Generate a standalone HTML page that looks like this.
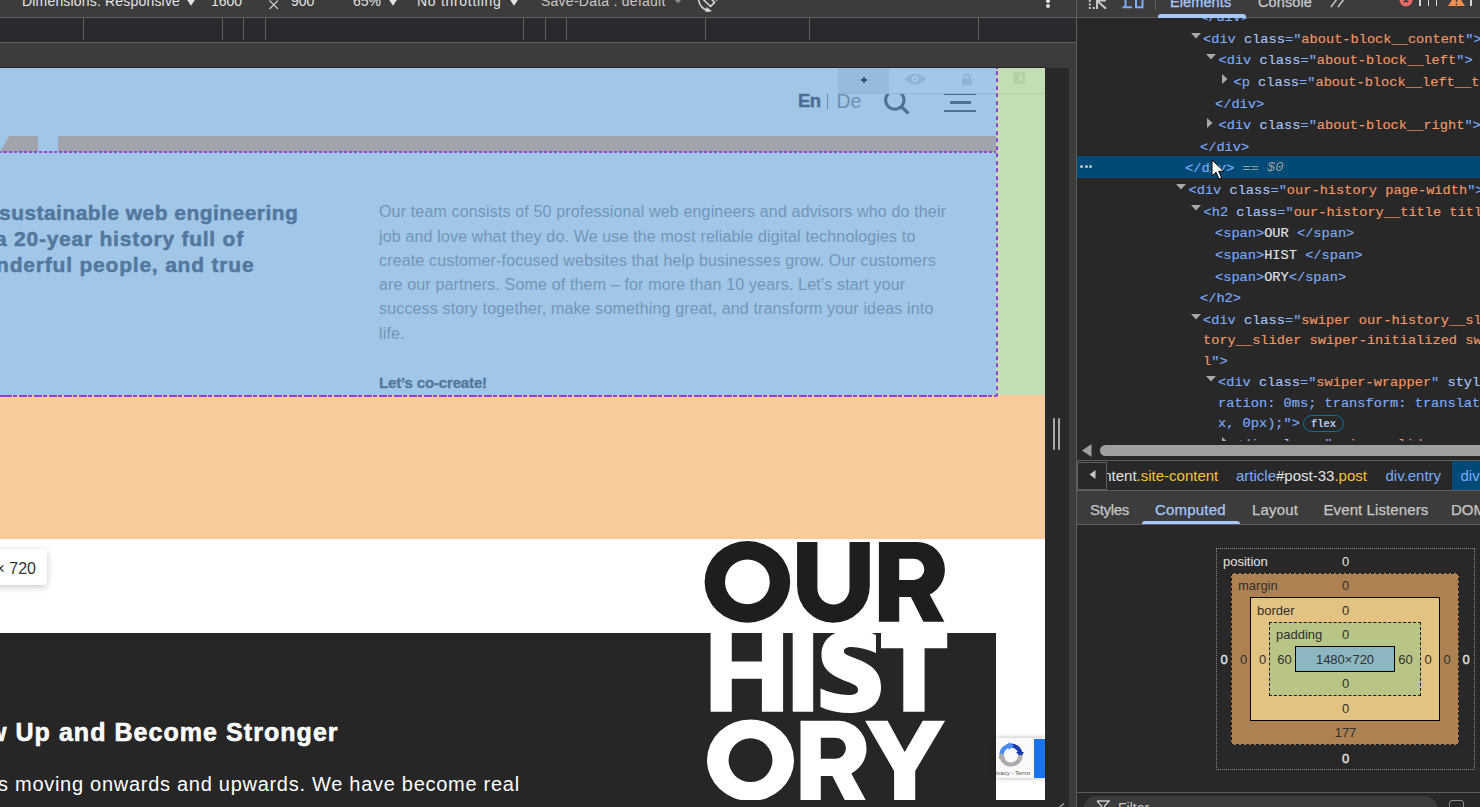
<!DOCTYPE html><html><head><meta charset="utf-8"><style>
html,body{margin:0;padding:0;width:1480px;height:807px;overflow:hidden;background:#282828;}
.t{position:absolute;white-space:pre;}
.r{position:absolute;}
svg{position:absolute;}
</style></head><body>
<div class="r" style="left:0px;top:0px;width:1076px;height:17px;background:#3c3c3c;"></div>
<div class="r" style="left:0px;top:17px;width:1076px;height:1px;background:#5e5e5e;"></div>
<div class="r" style="left:0px;top:18px;width:1076px;height:24px;background:#292a2d;"></div>
<div class="r" style="left:83px;top:18px;width:1px;height:22px;background:#5e5e5e;"></div>
<div class="r" style="left:222px;top:18px;width:1px;height:22px;background:#5e5e5e;"></div>
<div class="r" style="left:243px;top:18px;width:1px;height:22px;background:#5e5e5e;"></div>
<div class="r" style="left:265px;top:18px;width:1px;height:22px;background:#5e5e5e;"></div>
<div class="r" style="left:523px;top:18px;width:1px;height:22px;background:#5e5e5e;"></div>
<div class="r" style="left:545px;top:18px;width:1px;height:22px;background:#5e5e5e;"></div>
<div class="r" style="left:566px;top:18px;width:1px;height:22px;background:#5e5e5e;"></div>
<div class="r" style="left:705px;top:18px;width:1px;height:22px;background:#5e5e5e;"></div>
<div class="r" style="left:809px;top:18px;width:1px;height:22px;background:#5e5e5e;"></div>
<div class="r" style="left:978px;top:18px;width:1px;height:22px;background:#5e5e5e;"></div>
<div class="r" style="left:0px;top:42px;width:1076px;height:1px;background:#5e5e5e;"></div>
<div class="r" style="left:0px;top:43px;width:1076px;height:764px;background:#3c3c3c;"></div>
<div class="r" style="left:0px;top:68px;width:1069px;height:739px;background:#28292b;"></div>
<div class="r" style="left:0px;top:67px;width:1045px;height:1px;background:#252525;"></div>
<div class="t" style="left:22px;top:-5.85px;font-size:14px;line-height:14px;color:#e3e3e3;font-weight:400;font-family:'Liberation Sans', sans-serif;letter-spacing:0.18px;">Dimensions: Responsive</div>
<div class="t" style="left:211px;top:-5.85px;font-size:14px;line-height:14px;color:#e3e3e3;font-weight:400;font-family:'Liberation Sans', sans-serif;letter-spacing:0px;">1600</div>
<div class="t" style="left:291px;top:-5.85px;font-size:14px;line-height:14px;color:#e3e3e3;font-weight:400;font-family:'Liberation Sans', sans-serif;letter-spacing:0px;">900</div>
<div class="t" style="left:353px;top:-5.85px;font-size:14px;line-height:14px;color:#e3e3e3;font-weight:400;font-family:'Liberation Sans', sans-serif;letter-spacing:0px;">65%</div>
<div class="t" style="left:417px;top:-5.85px;font-size:14px;line-height:14px;color:#e3e3e3;font-weight:400;font-family:'Liberation Sans', sans-serif;letter-spacing:0.7px;">No throttling</div>
<div class="t" style="left:541px;top:-5.85px;font-size:14px;line-height:14px;color:#c7c7c7;font-weight:400;font-family:'Liberation Sans', sans-serif;letter-spacing:0.25px;">Save-Data : default</div>
<svg style="left:185px;top:-4px" width="12" height="12" viewBox="0 0 12 12"><path d="M0.8 2 L11.2 2 L6 9.7 Z" fill="#e3e3e3"/></svg>
<svg style="left:387px;top:-4px" width="12" height="12" viewBox="0 0 12 12"><path d="M0.8 2 L11.2 2 L6 9.7 Z" fill="#e3e3e3"/></svg>
<svg style="left:508.29999999999995px;top:-4px" width="12" height="12" viewBox="0 0 12 12"><path d="M0.8 2 L11.2 2 L6 9.7 Z" fill="#e3e3e3"/></svg>
<svg style="left:672.4px;top:-4px" width="12" height="12" viewBox="0 0 12 12"><path d="M0.8 2 L11.2 2 L6 7.2 Z" fill="#8e8e8e"/></svg>
<svg style="left:268px;top:-1px" width="12" height="11" viewBox="0 0 12 11"><path d="M1.5 1.5 L10 10 M10 1.5 L1.5 10" stroke="#c7c7c7" stroke-width="1.3"/></svg>
<svg style="left:690px;top:0px" width="30" height="16" viewBox="0 0 30 16"><path d="M8.6 0 A12.5 12.5 0 0 0 19.5 10.9" fill="none" stroke="#d6d6d6" stroke-width="1.6"/><path d="M16.4 6.9 L22.2 11.2 L15.6 12 Z" fill="#d6d6d6"/><path d="M13.5 -0.3 L20.5 6.5 L24.6 2.4 L17.7 -4.5" fill="none" stroke="#d6d6d6" stroke-width="1.6" stroke-linejoin="round"/><rect x="25.5" y="-1" width="2" height="2" fill="#9e9e9e"/></svg>
<div class="r" style="left:1046px;top:-1.5px;width:4px;height:4px;background:#e3e3e3;border-radius:50%"></div>
<div class="r" style="left:1046px;top:4.2px;width:4px;height:4px;background:#e3e3e3;border-radius:50%"></div>
<div class="r" style="left:1053px;top:417.5px;width:2.2px;height:32.5px;background:#a8a8a8;border-radius:1px"></div>
<div class="r" style="left:1057.5px;top:417.5px;width:2.2px;height:32.5px;background:#a8a8a8;border-radius:1px"></div>
<svg style="left:1055px;top:800px" width="12" height="8" viewBox="0 0 12 8"><path d="M3.5 8 L9 3.5" stroke="#9e9e9e" stroke-width="1.6"/></svg>
<div class="r" style="left:1076px;top:0px;width:1px;height:807px;background:#5e5e5e;"></div>
<div class="r" style="left:0px;top:68px;width:996px;height:327px;background:#a0c6e8;"></div>
<div class="r" style="left:996px;top:68px;width:49px;height:327px;background:#c3ddb5;"></div>
<div class="r" style="left:0px;top:136px;width:38px;height:16px;background:#a0a4ad;clip-path:polygon(0 100%,9px 0,100% 0,100% 100%)"></div>
<div class="r" style="left:58px;top:136px;width:938px;height:16px;background:#a0a4ad;"></div>
<div class="r" style="left:0px;top:395px;width:1045px;height:144px;background:#f7cb9c;"></div>
<div class="r" style="left:0px;top:539px;width:1045px;height:94px;background:#ffffff;"></div>
<div class="r" style="left:0px;top:633px;width:996px;height:167px;background:#262626;"></div>
<div class="r" style="left:996px;top:633px;width:49px;height:167px;background:#ffffff;"></div>
<div class="t" style="left:798px;top:92.34px;font-size:18.5px;line-height:18.5px;color:#4a6e93;font-weight:700;font-family:'Liberation Sans', sans-serif;letter-spacing:-0.5px;-webkit-text-stroke:0.4px #4a6e93">En</div>
<div class="r" style="left:827px;top:94px;width:1px;height:15px;background:#6a8db0;"></div>
<div class="t" style="left:836.5px;top:91.59px;font-size:19.5px;line-height:19.5px;color:#6e91b3;font-weight:400;font-family:'Liberation Sans', sans-serif;letter-spacing:0px;">De</div>
<svg style="left:880px;top:86px" width="32" height="30" viewBox="0 0 32 30"><circle cx="14.8" cy="14" r="9.2" fill="none" stroke="#4d7197" stroke-width="3.1"/><path d="M21 20.5 L28.5 27.5" stroke="#4d7197" stroke-width="3.2"/></svg>
<div class="r" style="left:944px;top:93px;width:32px;height:2px;background:#4d7197;"></div>
<div class="r" style="left:949.5px;top:101px;width:21px;height:2.5px;background:#4d7197;"></div>
<div class="r" style="left:944px;top:109.5px;width:32px;height:2.5px;background:#4d7197;"></div>
<div class="r" style="left:838px;top:68px;width:158px;height:25px;background:#a2c7e9;"></div>
<div class="r" style="left:838px;top:68px;width:51px;height:25px;background:#97badf;"></div>
<div class="r" style="left:838px;top:93px;width:158px;height:1px;background:#94b6d6;"></div>
<div class="r" style="left:996px;top:93px;width:49px;height:1px;background:#b5cfa8;"></div>
<div class="r" style="left:861px;top:79px;width:6px;height:2.2px;background:#2f4f7a;"></div>
<div class="r" style="left:862.9px;top:77px;width:2.2px;height:6px;background:#2f4f7a;"></div>
<svg style="left:903px;top:71px" width="24" height="16" viewBox="0 0 24 16"><path d="M1 8 Q12 -3 23 8 Q12 19 1 8 Z" fill="#8fb4d8"/><circle cx="12" cy="8" r="3.2" fill="#a6c9ea"/><circle cx="12" cy="8" r="1.6" fill="#8fb4d8"/></svg>
<svg style="left:961px;top:72px" width="12" height="14" viewBox="0 0 12 14"><path d="M3.2 7 V5 A2.8 2.8 0 0 1 8.8 5 V7" fill="none" stroke="#8fb4d8" stroke-width="1.7"/><rect x="1" y="6.2" width="10" height="7" rx="0.8" fill="#8fb4d8"/></svg>
<svg style="left:1013px;top:72px" width="12" height="12" viewBox="0 0 12 12"><rect x="0" y="0" width="12" height="12" rx="2" fill="#b3cfa5"/><circle cx="6" cy="6" r="3.5" fill="#c3ddb5"/><path d="M6 2.5 A3.5 3.5 0 0 0 6 9.5 Z" fill="#b3cfa5"/></svg>
<div class="t" style="left:-1px;top:201.92px;font-size:21px;line-height:21px;color:#52789e;font-weight:700;font-family:'Liberation Sans', sans-serif;letter-spacing:0.45px;-webkit-text-stroke:0.5px #52789e">sustainable web engineering</div>
<div class="t" style="left:-5px;top:228.12px;font-size:21px;line-height:21px;color:#52789e;font-weight:700;font-family:'Liberation Sans', sans-serif;letter-spacing:0.76px;-webkit-text-stroke:0.5px #52789e">a 20-year history full of</div>
<div class="t" style="left:-4px;top:254.22px;font-size:21px;line-height:21px;color:#52789e;font-weight:700;font-family:'Liberation Sans', sans-serif;letter-spacing:0.8px;-webkit-text-stroke:0.5px #52789e">nderful people, and true</div>
<div class="t" style="left:379px;top:204.26px;font-size:16px;line-height:16px;color:#7296b9;font-weight:400;font-family:'Liberation Sans', sans-serif;letter-spacing:0.16px;">Our team consists of 50 professional web engineers and advisors who do their</div>
<div class="t" style="left:379px;top:228.56px;font-size:16px;line-height:16px;color:#7296b9;font-weight:400;font-family:'Liberation Sans', sans-serif;letter-spacing:0.16px;">job and love what they do. We use the most reliable digital technologies to</div>
<div class="t" style="left:379px;top:252.86px;font-size:16px;line-height:16px;color:#7296b9;font-weight:400;font-family:'Liberation Sans', sans-serif;letter-spacing:0.16px;">create customer-focused websites that help businesses grow. Our customers</div>
<div class="t" style="left:379px;top:277.06px;font-size:16px;line-height:16px;color:#7296b9;font-weight:400;font-family:'Liberation Sans', sans-serif;letter-spacing:0.16px;">are our partners. Some of them – for more than 10 years. Let’s start your</div>
<div class="t" style="left:379px;top:301.46px;font-size:16px;line-height:16px;color:#7296b9;font-weight:400;font-family:'Liberation Sans', sans-serif;letter-spacing:0.16px;">success story together, make something great, and transform your ideas into</div>
<div class="t" style="left:379px;top:325.86px;font-size:16px;line-height:16px;color:#7296b9;font-weight:400;font-family:'Liberation Sans', sans-serif;letter-spacing:0.16px;">life.</div>
<div class="t" style="left:379px;top:375.20px;font-size:15px;line-height:15px;color:#52789e;font-weight:700;font-family:'Liberation Sans', sans-serif;letter-spacing:-0.15px;-webkit-text-stroke:0.3px #52789e">Let’s co-create!</div>
<div class="r" style="left:0px;top:151.4px;width:996px;height:1.7px;background:repeating-linear-gradient(90deg,#9241d2 0 2.8px,transparent 2.8px 5px);background-position-x:4.05px"></div>
<div class="r" style="left:0px;top:395px;width:997px;height:2px;background:repeating-linear-gradient(90deg,#9241d2 0 7.8px,transparent 7.8px 9.1px,#9241d2 9.1px 12.8px,transparent 12.8px 15px);background-position-x:4.05px"></div>
<div class="r" style="left:996.2px;top:68px;width:1.7px;height:328px;background:repeating-linear-gradient(180deg,#9241d2 0 3.7px,transparent 3.7px 7.5px);background-position-y:3.2px"></div>
<svg style="left:690px;top:530px" width="270" height="270" viewBox="0 0 270 270"><path fill="#1e1e1e" fill-rule="evenodd" d="M14.60,51.90 A42.8,40.8 0 1 0 100.20,51.90 A42.8,40.8 0 1 0 14.60,51.90 Z M35.00,51.90 A22.4,22.4 0 1 1 79.80,51.90 A22.4,22.4 0 1 1 35.00,51.90 Z"/><path transform="translate(107.10,11.90)" d="M0,0 H20.3 V46.45 A16.05,16.05 0 0 0 52.4,46.45 V0 H72.7 V44.45 A36.35,36.35 0 0 1 0,44.45 Z" fill="#1e1e1e"/><path transform="translate(188.90,11.90)" d="M0,0 H38 A28,27.6 0 0 1 66,27.6 A27.5,27.5 0 0 1 50.8,52.6 L65.5,79.8 H44.5 L32,55.1 H20.3 V79.8 H0 Z M20.3,16.9 H34.9 A10.55,10.55 0 0 1 34.9,38 H20.3 Z" fill="#1e1e1e" fill-rule="evenodd"/><path transform="translate(20.60,102.70)" d="M0,0 H21.2 V28.7 H51.3 V0 H72.5 V79 H51.3 V46.1 H21.2 V79 H0 Z" fill="#fff"/><path transform="translate(102.70,102.70)" d="M0,0 H20.5 V79 H0 Z" fill="#fff"/><path transform="translate(130.50,101.00)" d="M55.5,4 C48,0 40,-1 31,-1 C12,-1 1,9 1,24 C1,40 14,46 30,52 C36,54.5 37.5,56 37.5,59 C37.5,62.5 34,64 28,64 C19,64 9,61.5 0,57.5 L0,76 C9,80 19,82 29,82 C50,82 60.5,72 60.5,56 C60.5,40 50,33 34,27 C26,24 23.4,22.5 23.4,20.5 C23.4,17.5 26,16 31,16 C39,16 47,18.5 55.5,22 Z" fill="#fff"/><path transform="translate(191.00,102.70)" d="M0,0 H66.2 V15.5 H43.6 V79 H22.3 V15.5 H0 Z" fill="#fff"/><path fill="#fff" fill-rule="evenodd" d="M17.00,230.20 A43.5,40.8 0 1 0 104.00,230.20 A43.5,40.8 0 1 0 17.00,230.20 Z M38.60,230.20 A21.9,21.9 0 1 1 82.40,230.20 A21.9,21.9 0 1 1 38.60,230.20 Z"/><path transform="translate(110.50,190.80)" d="M0,0 H38 A28,27.6 0 0 1 66,27.6 A27.5,27.5 0 0 1 50.8,52.6 L65.5,79.8 H44.5 L32,55.1 H20.3 V79.8 H0 Z M20.3,16.9 H34.9 A10.55,10.55 0 0 1 34.9,38 H20.3 Z" fill="#fff" fill-rule="evenodd"/><path transform="translate(175.10,190.80)" d="M0,0 H22.5 L39.6,31.2 L57.7,0 H80 L50.1,50.1 V80 H29 V50.1 Z" fill="#fff"/></svg>
<div class="r" style="left:-10px;top:549px;width:57px;height:36px;background:#fff;border-radius:4px;box-shadow:0 2px 7px rgba(0,0,0,0.22)"></div>
<div class="t" style="left:-4.5px;top:561.46px;font-size:16px;line-height:16px;color:#333333;font-weight:400;font-family:'Liberation Sans', sans-serif;letter-spacing:0px;">× 720</div>
<div class="t" style="left:-13px;top:719.54px;font-size:25px;line-height:25px;color:#ffffff;font-weight:700;font-family:'Liberation Sans', sans-serif;letter-spacing:1.05px;-webkit-text-stroke:0.6px #fff">w Up and Become Stronger</div>
<div class="t" style="left:-2px;top:773.67px;font-size:20px;line-height:20px;color:#ffffff;font-weight:400;font-family:'Liberation Sans', sans-serif;letter-spacing:0.72px;">s moving onwards and upwards. We have become real</div>
<div class="r" style="left:996px;top:738px;width:49px;height:40px;background:#f9f9f9;box-shadow:0 0 5px rgba(0,0,0,0.3)"></div>
<div class="r" style="left:1034px;top:739px;width:11px;height:39px;background:#1a73e8;"></div>
<svg style="left:998px;top:742px" width="26" height="26" viewBox="0 0 26 26"><path d="M13 3.5 A9.5 9.5 0 0 1 22.5 13" fill="none" stroke="#1c3aa9" stroke-width="4.2"/><path d="M18 10 L26 10 L22.5 15 Z" fill="#1c3aa9"/><path d="M3.5 13 A9.5 9.5 0 0 1 13 3.5" fill="none" stroke="#4a8af4" stroke-width="4.2"/><path d="M10.5 0 L16 3.8 L10.5 8 Z" fill="#4a8af4"/><path d="M22.5 13 A9.5 9.5 0 0 1 3.5 13" fill="none" stroke="#ababab" stroke-width="4.2"/><path d="M0 16.5 L7.5 16.5 L3.5 10.5 Z" fill="#ababab"/></svg>
<div class="r" style="left:996px;top:769px;width:34px;height:8px;overflow:hidden"><div class="t" style="left:-2px;top:0px;font-size:6px;line-height:8px;color:#555;font-family:'Liberation Sans',sans-serif">rivacy - Terms</div></div>
<div class="r" style="left:1077px;top:0px;width:403px;height:807px;background:#282828;"></div>
<div class="r" style="left:1077px;top:0px;width:403px;height:17px;background:#3c3c3c;"></div>
<div class="r" style="left:1077px;top:17px;width:403px;height:1px;background:#5e5e5e;"></div>
<svg style="left:1086px;top:-4px" width="24" height="16" viewBox="0 0 24 16"><g fill="#c7c7c7"><rect x="2.8" y="3.8" width="2" height="2"/><rect x="2.8" y="7.5" width="2" height="2"/><rect x="2.8" y="11" width="2" height="2"/><rect x="6.8" y="11" width="2" height="2"/></g><path d="M11 1 V13 M11 4.5 H20 M11.5 5 L20 12.8" stroke="#c7c7c7" stroke-width="2" fill="none"/></svg>
<svg style="left:1120px;top:-4px" width="26" height="16" viewBox="0 0 26 16"><path d="M5.5 0 V11.2 M2.5 11.2 H12" stroke="#7cacf8" stroke-width="2" fill="none"/><path d="M16 0 V11.2 H22.5 V0" stroke="#7cacf8" stroke-width="2" fill="none"/></svg>
<div class="r" style="left:1155px;top:0px;width:1px;height:10px;background:#5e5e5e;"></div>
<div class="t" style="left:1170px;top:-5.27px;font-size:14.5px;line-height:14.5px;color:#a8c7fa;font-weight:400;font-family:'Liberation Sans', sans-serif;letter-spacing:0.1px;-webkit-text-stroke:0.3px #a8c7fa">Elements</div>
<div class="r" style="left:1158px;top:13.7px;width:88px;height:4.3px;background:#a8c7fa;border-radius:3px 3px 0 0"></div>
<div class="t" style="left:1258px;top:-5.27px;font-size:14.5px;line-height:14.5px;color:#c7c7c7;font-weight:400;font-family:'Liberation Sans', sans-serif;letter-spacing:0.1px;-webkit-text-stroke:0.3px #c7c7c7">Console</div>
<svg style="left:1330px;top:-4px" width="18" height="12" viewBox="0 0 18 12"><path d="M1 11 L7 3 M8 11 L14 3" stroke="#c7c7c7" stroke-width="1.5" fill="none"/></svg>
<svg style="left:1398.5px;top:-7.2px" width="14" height="14" viewBox="0 0 14 14"><circle cx="7" cy="7" r="6.5" fill="#ea6b65"/><path d="M4.6 4.6 L9.4 9.4 M9.4 4.6 L4.6 9.4" stroke="#3c3c3c" stroke-width="1.4"/></svg>
<div class="r" style="left:1419px;top:-2px;width:1.7px;height:8px;background:#d6d6d6;"></div>
<div class="r" style="left:1427.6px;top:-2px;width:1.7px;height:8px;background:#d6d6d6;"></div>
<div class="r" style="left:1435.6px;top:-2px;width:1.7px;height:8px;background:#d6d6d6;"></div>
<svg style="left:1448px;top:-7px" width="17" height="14" viewBox="0 0 17 14"><path d="M8.5 0 L17 13 L0 13 Z" fill="#ee9053"/><path d="M8.5 4 V9 M8.5 10.5 V12" stroke="#3c3c3c" stroke-width="1.6"/></svg>
<div class="r" style="left:1469.9px;top:-2px;width:1.7px;height:8px;background:#d6d6d6;"></div>
<div style="position:absolute;left:0;top:0;width:1480px;height:807px;clip-path:inset(18px 0 366px 0)">
<div class="r" style="left:1077px;top:156px;width:403px;height:22px;background:#004a77;"></div>
<div class="r" style="left:1080.0px;top:164.5px;width:3px;height:3px;background:#c7c7c7;border-radius:50%"></div>
<div class="r" style="left:1084.5px;top:164.5px;width:3px;height:3px;background:#c7c7c7;border-radius:50%"></div>
<div class="r" style="left:1089.0px;top:164.5px;width:3px;height:3px;background:#c7c7c7;border-radius:50%"></div>
<div class="t" style="left:1200px;top:11.32px;font-size:13.67px;line-height:13.67px;color:#e3e3e3;font-weight:400;font-family:'Liberation Mono', monospace;letter-spacing:0px;-webkit-text-stroke:0.15px currentColor"><span style="color:#7cacf8">&lt;/div&gt;</span></div>
<svg style="left:1190.5px;top:32.8px" width="10" height="6" viewBox="0 0 10 6"><path d="M0 0 H10 L5 5.5 Z" fill="#a8a8a8"/></svg>
<div class="t" style="left:1203px;top:33.12px;font-size:13.67px;line-height:13.67px;color:#e3e3e3;font-weight:400;font-family:'Liberation Mono', monospace;letter-spacing:0px;-webkit-text-stroke:0.15px currentColor"><span style="color:#7cacf8">&lt;div </span><span style="color:#a8c6f6">class</span><span style="color:#7cacf8">=&quot;</span><span style="color:#f29766">about-block__content</span><span style="color:#7cacf8">&quot;&gt;</span></div>
<svg style="left:1205.5px;top:53.8px" width="10" height="6" viewBox="0 0 10 6"><path d="M0 0 H10 L5 5.5 Z" fill="#a8a8a8"/></svg>
<div class="t" style="left:1218.5px;top:54.12px;font-size:13.67px;line-height:13.67px;color:#e3e3e3;font-weight:400;font-family:'Liberation Mono', monospace;letter-spacing:0px;-webkit-text-stroke:0.15px currentColor"><span style="color:#7cacf8">&lt;div </span><span style="color:#a8c6f6">class</span><span style="color:#7cacf8">=&quot;</span><span style="color:#f29766">about-block__left</span><span style="color:#7cacf8">&quot;&gt;</span></div>
<svg style="left:1222px;top:74.2px" width="6" height="10" viewBox="0 0 6 10"><path d="M0 0 V10 L5.5 5 Z" fill="#a8a8a8"/></svg>
<div class="t" style="left:1233.5px;top:76.02px;font-size:13.67px;line-height:13.67px;color:#e3e3e3;font-weight:400;font-family:'Liberation Mono', monospace;letter-spacing:0px;-webkit-text-stroke:0.15px currentColor"><span style="color:#7cacf8">&lt;p </span><span style="color:#a8c6f6">class</span><span style="color:#7cacf8">=&quot;</span><span style="color:#f29766">about-block__left__t</span><span style="color:#7cacf8"></span></div>
<div class="t" style="left:1215px;top:98.02px;font-size:13.67px;line-height:13.67px;color:#e3e3e3;font-weight:400;font-family:'Liberation Mono', monospace;letter-spacing:0px;-webkit-text-stroke:0.15px currentColor"><span style="color:#7cacf8">&lt;/div&gt;</span></div>
<svg style="left:1207px;top:117.5px" width="6" height="10" viewBox="0 0 6 10"><path d="M0 0 V10 L5.5 5 Z" fill="#a8a8a8"/></svg>
<div class="t" style="left:1218.5px;top:119.32px;font-size:13.67px;line-height:13.67px;color:#e3e3e3;font-weight:400;font-family:'Liberation Mono', monospace;letter-spacing:0px;-webkit-text-stroke:0.15px currentColor"><span style="color:#7cacf8">&lt;div </span><span style="color:#a8c6f6">class</span><span style="color:#7cacf8">=&quot;</span><span style="color:#f29766">about-block__right</span><span style="color:#7cacf8">&quot;&gt;</span></div>
<div class="t" style="left:1200px;top:140.82px;font-size:13.67px;line-height:13.67px;color:#e3e3e3;font-weight:400;font-family:'Liberation Mono', monospace;letter-spacing:0px;-webkit-text-stroke:0.15px currentColor"><span style="color:#7cacf8">&lt;/div&gt;</span></div>
<div class="t" style="left:1185px;top:161.82px;font-size:13.67px;line-height:13.67px;color:#e3e3e3;font-weight:400;font-family:'Liberation Mono', monospace;letter-spacing:0px;-webkit-text-stroke:0.15px currentColor"><span style="color:#7cacf8">&lt;/div&gt;</span><span style="color:#9e9e9e"> == </span></div>
<div class="t" style="left:1267.0px;top:161.02px;font-size:13.67px;line-height:13.67px;color:#9e9e9e;font-weight:400;font-family:'Liberation Mono', monospace;letter-spacing:0px;font-style:italic">$0</div>
<svg style="left:1211px;top:159px" width="14" height="22" viewBox="0 0 14 22"><path d="M1 1 L1 17 L5 13.2 L8 20 L10.6 18.9 L7.7 12.3 L13 12.3 Z" fill="#fff" stroke="#000" stroke-width="1" stroke-linejoin="round"/></svg>
<svg style="left:1176.0px;top:183.6px" width="10" height="6" viewBox="0 0 10 6"><path d="M0 0 H10 L5 5.5 Z" fill="#a8a8a8"/></svg>
<div class="t" style="left:1188.5px;top:183.92px;font-size:13.67px;line-height:13.67px;color:#e3e3e3;font-weight:400;font-family:'Liberation Mono', monospace;letter-spacing:0px;-webkit-text-stroke:0.15px currentColor"><span style="color:#7cacf8">&lt;div </span><span style="color:#a8c6f6">class</span><span style="color:#7cacf8">=&quot;</span><span style="color:#f29766">our-history page-width</span><span style="color:#7cacf8">&quot;&gt;</span></div>
<svg style="left:1191.0px;top:205.3px" width="10" height="6" viewBox="0 0 10 6"><path d="M0 0 H10 L5 5.5 Z" fill="#a8a8a8"/></svg>
<div class="t" style="left:1203.5px;top:205.62px;font-size:13.67px;line-height:13.67px;color:#e3e3e3;font-weight:400;font-family:'Liberation Mono', monospace;letter-spacing:0px;-webkit-text-stroke:0.15px currentColor"><span style="color:#7cacf8">&lt;h2 </span><span style="color:#a8c6f6">class</span><span style="color:#7cacf8">=&quot;</span><span style="color:#f29766">our-history__title titl</span></div>
<div class="t" style="left:1215px;top:227.42px;font-size:13.67px;line-height:13.67px;color:#e3e3e3;font-weight:400;font-family:'Liberation Mono', monospace;letter-spacing:0px;-webkit-text-stroke:0.15px currentColor"><span style="color:#7cacf8">&lt;span&gt;</span><span style="color:#e3e3e3">OUR </span><span style="color:#7cacf8">&lt;/span&gt;</span></div>
<div class="t" style="left:1215px;top:248.82px;font-size:13.67px;line-height:13.67px;color:#e3e3e3;font-weight:400;font-family:'Liberation Mono', monospace;letter-spacing:0px;-webkit-text-stroke:0.15px currentColor"><span style="color:#7cacf8">&lt;span&gt;</span><span style="color:#e3e3e3">HIST </span><span style="color:#7cacf8">&lt;/span&gt;</span></div>
<div class="t" style="left:1215px;top:270.62px;font-size:13.67px;line-height:13.67px;color:#e3e3e3;font-weight:400;font-family:'Liberation Mono', monospace;letter-spacing:0px;-webkit-text-stroke:0.15px currentColor"><span style="color:#7cacf8">&lt;span&gt;</span><span style="color:#e3e3e3">ORY</span><span style="color:#7cacf8">&lt;/span&gt;</span></div>
<div class="t" style="left:1200px;top:292.42px;font-size:13.67px;line-height:13.67px;color:#e3e3e3;font-weight:400;font-family:'Liberation Mono', monospace;letter-spacing:0px;-webkit-text-stroke:0.15px currentColor"><span style="color:#7cacf8">&lt;/h2&gt;</span></div>
<svg style="left:1190.5px;top:313.5px" width="10" height="6" viewBox="0 0 10 6"><path d="M0 0 H10 L5 5.5 Z" fill="#a8a8a8"/></svg>
<div class="t" style="left:1203px;top:313.82px;font-size:13.67px;line-height:13.67px;color:#e3e3e3;font-weight:400;font-family:'Liberation Mono', monospace;letter-spacing:0px;-webkit-text-stroke:0.15px currentColor"><span style="color:#7cacf8">&lt;div </span><span style="color:#a8c6f6">class</span><span style="color:#7cacf8">=&quot;</span><span style="color:#f29766">swiper our-history__sl</span></div>
<div class="t" style="left:1203px;top:334.22px;font-size:13.67px;line-height:13.67px;color:#e3e3e3;font-weight:400;font-family:'Liberation Mono', monospace;letter-spacing:0px;-webkit-text-stroke:0.15px currentColor"><span style="color:#f29766">tory__slider swiper-initialized sw</span></div>
<div class="t" style="left:1203px;top:354.62px;font-size:13.67px;line-height:13.67px;color:#e3e3e3;font-weight:400;font-family:'Liberation Mono', monospace;letter-spacing:0px;-webkit-text-stroke:0.15px currentColor"><span style="color:#f29766">l</span><span style="color:#7cacf8">&quot;&gt;</span></div>
<svg style="left:1205.5px;top:375.7px" width="10" height="6" viewBox="0 0 10 6"><path d="M0 0 H10 L5 5.5 Z" fill="#a8a8a8"/></svg>
<div class="t" style="left:1218px;top:376.02px;font-size:13.67px;line-height:13.67px;color:#e3e3e3;font-weight:400;font-family:'Liberation Mono', monospace;letter-spacing:0px;-webkit-text-stroke:0.15px currentColor"><span style="color:#7cacf8">&lt;div </span><span style="color:#a8c6f6">class</span><span style="color:#7cacf8">=&quot;</span><span style="color:#f29766">swiper-wrapper</span><span style="color:#7cacf8">&quot; </span><span style="color:#a8c6f6">styl</span></div>
<div class="t" style="left:1218px;top:396.52px;font-size:13.67px;line-height:13.67px;color:#e3e3e3;font-weight:400;font-family:'Liberation Mono', monospace;letter-spacing:0px;-webkit-text-stroke:0.15px currentColor"><span style="color:#7cacf8">ration: 0ms; transform: translat</span></div>
<div class="t" style="left:1218px;top:416.92px;font-size:13.67px;line-height:13.67px;color:#e3e3e3;font-weight:400;font-family:'Liberation Mono', monospace;letter-spacing:0px;-webkit-text-stroke:0.15px currentColor"><span style="color:#7cacf8">x, 0px);&quot;&gt;</span></div>
<div class="r" style="left:1303px;top:415px;width:39px;height:15px;border:1px solid #0e6fa3;border-radius:9px"></div>
<div class="t" style="left:1323.5px;transform:translateX(-50%);top:418.95px;font-size:10.5px;line-height:10.5px;color:#b4cdf5;font-weight:700;font-family:'Liberation Mono', monospace;letter-spacing:0px;">flex</div>
<svg style="left:1222px;top:436.5px" width="6" height="10" viewBox="0 0 6 10"><path d="M0 0 V10 L5.5 5 Z" fill="#a8a8a8"/></svg>
<div class="t" style="left:1234px;top:438.32px;font-size:13.67px;line-height:13.67px;color:#e3e3e3;font-weight:400;font-family:'Liberation Mono', monospace;letter-spacing:0px;-webkit-text-stroke:0.15px currentColor"><span style="color:#7cacf8">&lt;div </span><span style="color:#a8c6f6">class</span><span style="color:#7cacf8">=&quot;</span><span style="color:#f29766">swiper-slide</span></div>
</div>
<div class="r" style="left:1077px;top:441px;width:403px;height:19px;background:#282828;"></div>
<svg style="left:1082px;top:444px" width="10" height="13" viewBox="0 0 10 13"><path d="M9.5 0 V13 L0 6.5 Z" fill="#a0a0a0"/></svg>
<div class="r" style="left:1100px;top:445px;width:400px;height:11px;background:#a0a0a0;border-radius:6px"></div>
<div class="r" style="left:1077px;top:460px;width:403px;height:1px;background:#5e5e5e;"></div>
<div class="r" style="left:1452px;top:461px;width:28px;height:29px;background:#004a77;"></div>
<div class="r" style="left:1107px;top:461px;width:373px;height:29px;overflow:hidden">
<div class="t" style="left:-3.7999999999999545px;top:6.80px;font-size:15px;line-height:15px;color:#e3e3e3;font-weight:400;font-family:'Liberation Sans', sans-serif;letter-spacing:0px;"><span style="color:#e3e3e3">ntent</span><span style="color:#f4c431">.site-content</span></div>
<div class="t" style="left:129px;top:6.80px;font-size:15px;line-height:15px;color:#e3e3e3;font-weight:400;font-family:'Liberation Sans', sans-serif;letter-spacing:0px;"><span style="color:#7cacf8">article</span><span style="color:#e3e3e3">#post-33</span><span style="color:#f4c431">.post</span></div>
<div class="t" style="left:278.5px;top:6.80px;font-size:15px;line-height:15px;color:#e3e3e3;font-weight:400;font-family:'Liberation Sans', sans-serif;letter-spacing:0px;"><span style="color:#7cacf8">div.entry</span></div>
<div class="t" style="left:353.5px;top:6.80px;font-size:15px;line-height:15px;color:#e3e3e3;font-weight:400;font-family:'Liberation Sans', sans-serif;letter-spacing:0px;"><span style="color:#7cacf8">div</span></div>
</div>
<div class="r" style="left:1077px;top:462px;width:28px;height:26px;border:1px solid #5e5e5e;background:#282828"></div>
<svg style="left:1088.5px;top:470px" width="7" height="9" viewBox="0 0 7 9"><path d="M6.5 0 V9 L0.5 4.5 Z" fill="#c7c7c7"/></svg>
<div class="r" style="left:1077px;top:490px;width:403px;height:1px;background:#5e5e5e;"></div>
<div class="r" style="left:1077px;top:491px;width:403px;height:33px;background:#3c3c3c;"></div>
<div class="t" style="left:1090px;top:501.80px;font-size:15px;line-height:15px;color:#c7c7c7;font-weight:400;font-family:'Liberation Sans', sans-serif;letter-spacing:-0.3px;-webkit-text-stroke:0.25px #c7c7c7">Styles</div>
<div class="t" style="left:1155px;top:501.80px;font-size:15px;line-height:15px;color:#a8c7fa;font-weight:400;font-family:'Liberation Sans', sans-serif;letter-spacing:0.2px;-webkit-text-stroke:0.25px #a8c7fa">Computed</div>
<div class="r" style="left:1142px;top:521px;width:98px;height:4px;background:#a8c7fa;border-radius:3px 3px 0 0"></div>
<div class="t" style="left:1252px;top:501.80px;font-size:15px;line-height:15px;color:#c7c7c7;font-weight:400;font-family:'Liberation Sans', sans-serif;letter-spacing:0.2px;-webkit-text-stroke:0.25px #c7c7c7">Layout</div>
<div class="t" style="left:1323.5px;top:501.80px;font-size:15px;line-height:15px;color:#c7c7c7;font-weight:400;font-family:'Liberation Sans', sans-serif;letter-spacing:0.1px;-webkit-text-stroke:0.25px #c7c7c7">Event Listeners</div>
<div class="t" style="left:1451px;top:501.80px;font-size:15px;line-height:15px;color:#c7c7c7;font-weight:400;font-family:'Liberation Sans', sans-serif;letter-spacing:0px;-webkit-text-stroke:0.25px #c7c7c7">DOM</div>
<div class="r" style="left:1077px;top:524px;width:403px;height:1px;background:#5e5e5e;"></div>
<div class="r" style="left:1216px;top:548px;width:257px;height:220px;border:1px dotted #8a8a8a"></div>
<div class="t" style="left:1223px;top:555.30px;font-size:13px;line-height:13px;color:#e3e3e3;font-weight:400;font-family:'Liberation Sans', sans-serif;letter-spacing:0px;">position</div>
<div class="t" style="left:1345.5px;transform:translateX(-50%);top:555.30px;font-size:13px;line-height:13px;color:#e3e3e3;font-weight:400;font-family:'Liberation Sans', sans-serif;letter-spacing:0px;">0</div>
<div class="r" style="left:1231px;top:573px;width:226px;height:170px;background:#ae8152;border:1px dashed #1b1b1b"></div>
<div class="t" style="left:1238px;top:579.40px;font-size:13px;line-height:13px;color:#303030;font-weight:400;font-family:'Liberation Sans', sans-serif;letter-spacing:0px;">margin</div>
<div class="t" style="left:1345.5px;transform:translateX(-50%);top:579.40px;font-size:13px;line-height:13px;color:#303030;font-weight:400;font-family:'Liberation Sans', sans-serif;letter-spacing:0px;">0</div>
<div class="r" style="left:1250px;top:597px;width:188px;height:122px;background:#e3c381;border:1px solid #000"></div>
<div class="t" style="left:1257px;top:603.60px;font-size:13px;line-height:13px;color:#303030;font-weight:400;font-family:'Liberation Sans', sans-serif;letter-spacing:0px;">border</div>
<div class="t" style="left:1345.5px;transform:translateX(-50%);top:603.60px;font-size:13px;line-height:13px;color:#303030;font-weight:400;font-family:'Liberation Sans', sans-serif;letter-spacing:0px;">0</div>
<div class="r" style="left:1269px;top:622px;width:150px;height:72px;background:#b9c586;border:1px dashed #1b1b1b"></div>
<div class="t" style="left:1276px;top:628.20px;font-size:13px;line-height:13px;color:#303030;font-weight:400;font-family:'Liberation Sans', sans-serif;letter-spacing:0px;">padding</div>
<div class="t" style="left:1345.5px;transform:translateX(-50%);top:628.20px;font-size:13px;line-height:13px;color:#303030;font-weight:400;font-family:'Liberation Sans', sans-serif;letter-spacing:0px;">0</div>
<div class="r" style="left:1295px;top:646px;width:98px;height:24px;background:#8cb6c0;border:1px solid #000"></div>
<div class="t" style="left:1345px;transform:translateX(-50%);top:652.90px;font-size:13px;line-height:13px;color:#303030;font-weight:400;font-family:'Liberation Sans', sans-serif;letter-spacing:0px;">1480×720</div>
<div class="t" style="left:1224px;transform:translateX(-50%);top:652.90px;font-size:13px;line-height:13px;color:#e3e3e3;font-weight:400;font-family:'Liberation Sans', sans-serif;letter-spacing:0px;-webkit-text-stroke:0.4px #e3e3e3">0</div>
<div class="t" style="left:1243.5px;transform:translateX(-50%);top:652.90px;font-size:13px;line-height:13px;color:#303030;font-weight:400;font-family:'Liberation Sans', sans-serif;letter-spacing:0px;">0</div>
<div class="t" style="left:1262.5px;transform:translateX(-50%);top:652.90px;font-size:13px;line-height:13px;color:#303030;font-weight:400;font-family:'Liberation Sans', sans-serif;letter-spacing:0px;">0</div>
<div class="t" style="left:1284.5px;transform:translateX(-50%);top:652.90px;font-size:13px;line-height:13px;color:#303030;font-weight:400;font-family:'Liberation Sans', sans-serif;letter-spacing:0px;">60</div>
<div class="t" style="left:1405.5px;transform:translateX(-50%);top:652.90px;font-size:13px;line-height:13px;color:#303030;font-weight:400;font-family:'Liberation Sans', sans-serif;letter-spacing:0px;">60</div>
<div class="t" style="left:1428px;transform:translateX(-50%);top:652.90px;font-size:13px;line-height:13px;color:#303030;font-weight:400;font-family:'Liberation Sans', sans-serif;letter-spacing:0px;">0</div>
<div class="t" style="left:1447px;transform:translateX(-50%);top:652.90px;font-size:13px;line-height:13px;color:#303030;font-weight:400;font-family:'Liberation Sans', sans-serif;letter-spacing:0px;">0</div>
<div class="t" style="left:1466px;transform:translateX(-50%);top:652.90px;font-size:13px;line-height:13px;color:#e3e3e3;font-weight:400;font-family:'Liberation Sans', sans-serif;letter-spacing:0px;-webkit-text-stroke:0.4px #e3e3e3">0</div>
<div class="t" style="left:1345.5px;transform:translateX(-50%);top:676.90px;font-size:13px;line-height:13px;color:#303030;font-weight:400;font-family:'Liberation Sans', sans-serif;letter-spacing:0px;">0</div>
<div class="t" style="left:1345.5px;transform:translateX(-50%);top:702.40px;font-size:13px;line-height:13px;color:#303030;font-weight:400;font-family:'Liberation Sans', sans-serif;letter-spacing:0px;">0</div>
<div class="t" style="left:1345.5px;transform:translateX(-50%);top:726.40px;font-size:13px;line-height:13px;color:#303030;font-weight:400;font-family:'Liberation Sans', sans-serif;letter-spacing:0px;">177</div>
<div class="t" style="left:1345.5px;transform:translateX(-50%);top:751.80px;font-size:13px;line-height:13px;color:#e3e3e3;font-weight:400;font-family:'Liberation Sans', sans-serif;letter-spacing:0px;-webkit-text-stroke:0.4px #e3e3e3">0</div>
<div class="r" style="left:1077px;top:792px;width:403px;height:1px;background:#5e5e5e;"></div>
<div class="r" style="left:1083px;top:796px;width:355px;height:30px;background:#3c3c3c;border-radius:14px"></div>
<svg style="left:1096px;top:800px" width="14" height="10" viewBox="0 0 14 10"><path d="M1 1 H13 L8.5 6 V10 M1 1 L5.5 6 V10" stroke="#c7c7c7" stroke-width="1.4" fill="none"/></svg>
<div class="t" style="left:1118px;top:801.15px;font-size:14px;line-height:14px;color:#c7c7c7;font-weight:400;font-family:'Liberation Sans', sans-serif;letter-spacing:0px;">Filter</div>
<div class="r" style="left:1449px;top:800px;width:13px;height:13px;border:1.5px solid #8a8a8a;border-radius:3px"></div>
</body></html>
